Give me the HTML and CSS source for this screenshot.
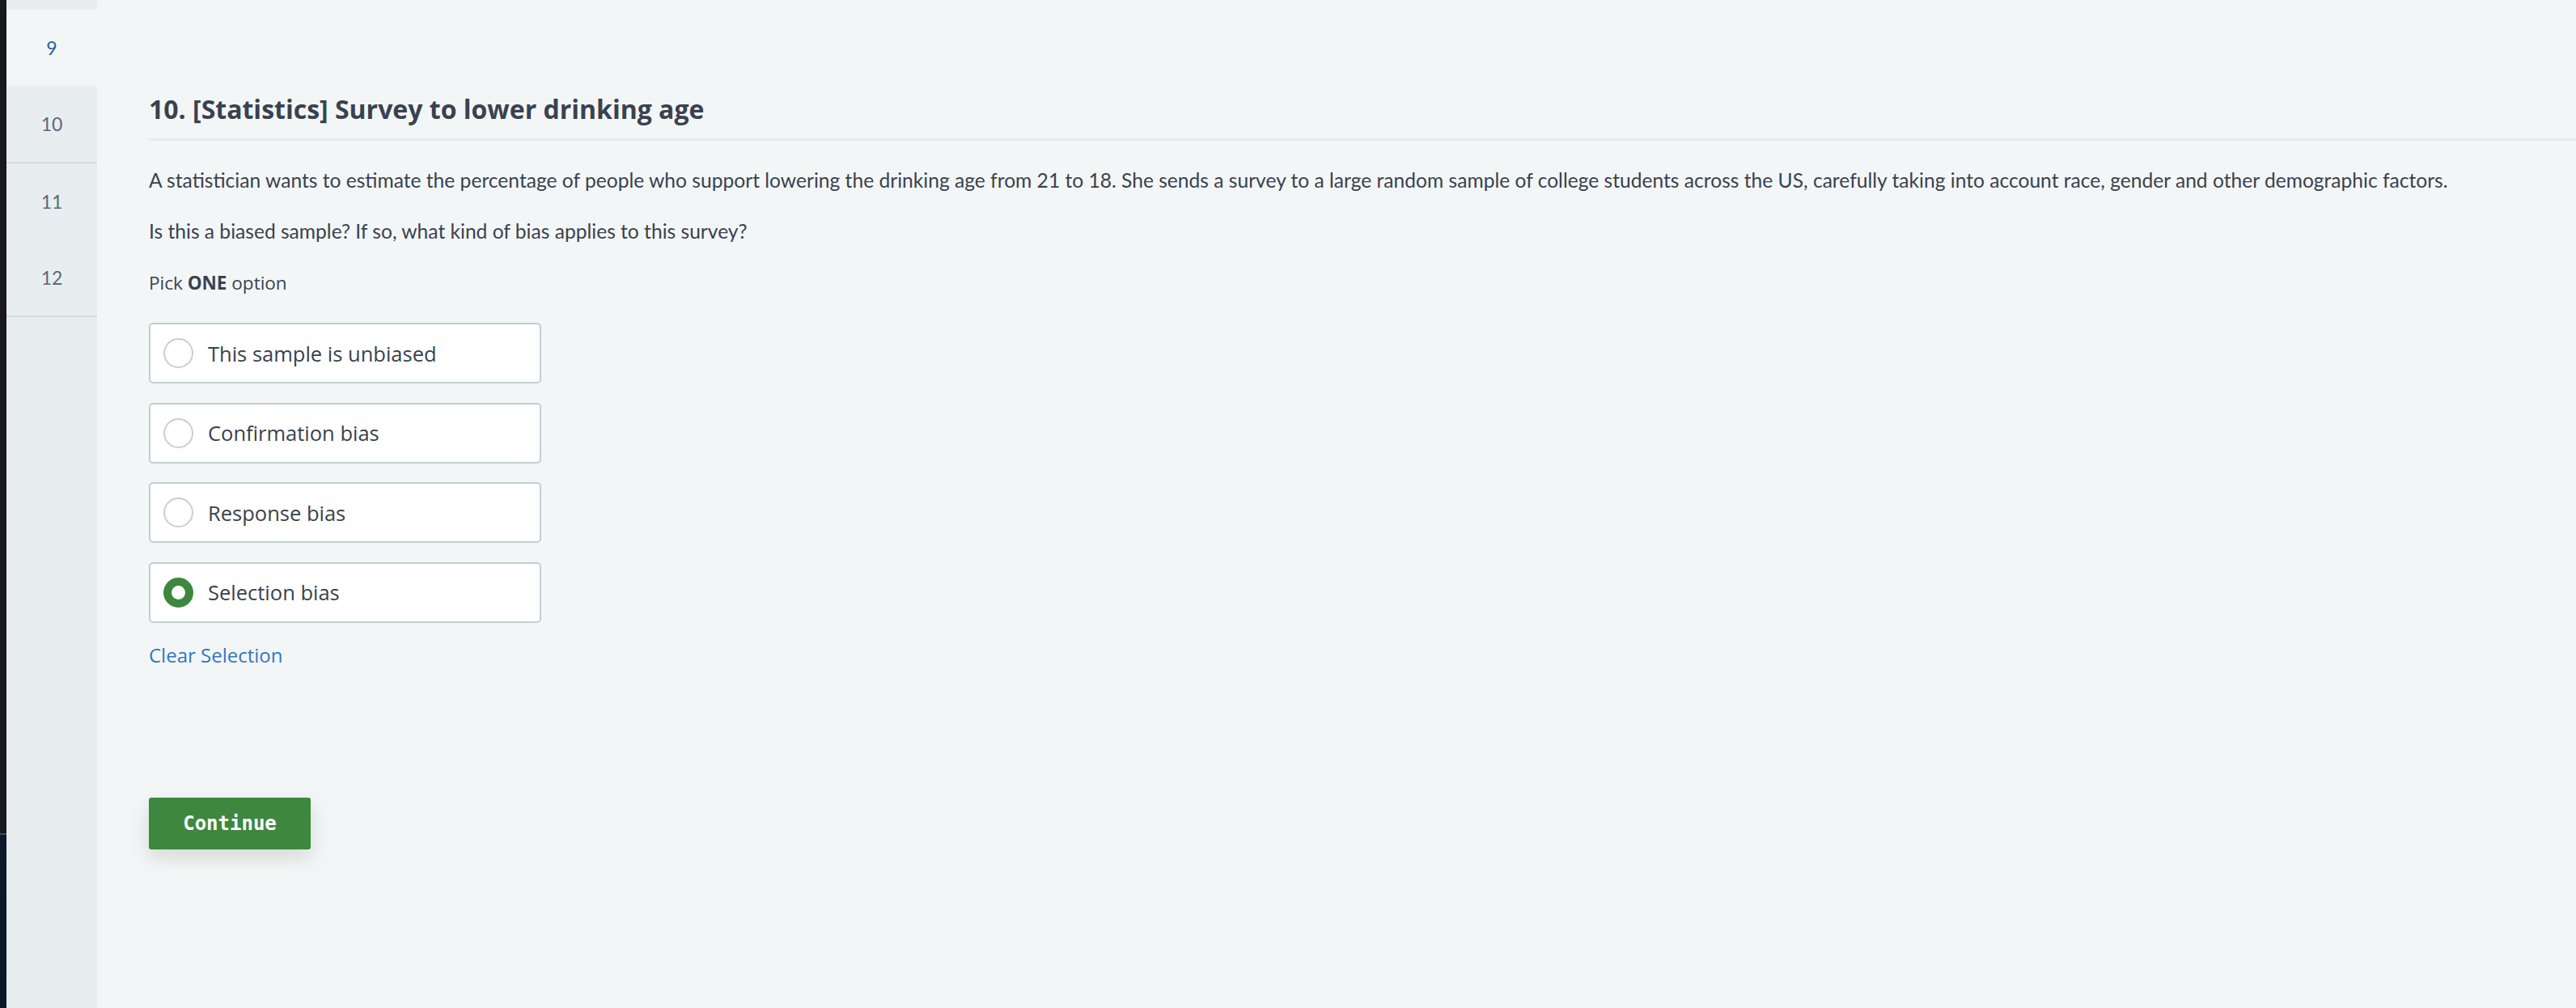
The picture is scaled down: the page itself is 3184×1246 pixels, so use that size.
FILE: index.html
```html
<!DOCTYPE html>
<html lang="en">
<head>
<meta charset="utf-8">
<title>Survey to lower drinking age</title>
<link rel="stylesheet" href="styles.css">
</head>
<body>
<div class="edge"></div>
<nav class="sidebar">
  <div class="nav-item nav-prev"></div>
  <div class="nav-item active">9</div>
  <div class="nav-item sep">10</div>
  <div class="nav-item">11</div>
  <div class="nav-item sep">12</div>
</nav>
<main class="main">
  <h1 class="title">10. [Statistics] Survey to lower drinking age</h1>
  <p class="body-text first">A statistician wants to estimate the percentage of people who support lowering the drinking age from 21 to 18. She sends a survey to a large random sample of college students across the US, carefully taking into account race, gender and other demographic factors.</p>
  <p class="body-text">Is this a biased sample? If so, what kind of bias applies to this survey?</p>
  <p class="pick">Pick <strong>ONE</strong> option</p>
  <div class="options">
    <label class="option"><span class="radio"></span><span class="option-text">This sample is unbiased</span></label>
    <label class="option"><span class="radio"></span><span class="option-text">Confirmation bias</span></label>
    <label class="option"><span class="radio"></span><span class="option-text">Response bias</span></label>
    <label class="option"><span class="radio checked"></span><span class="option-text">Selection bias</span></label>
  </div>
  <a class="clear" href="#">Clear Selection</a>
  <button class="continue" type="button">Continue</button>
</main>
</body>
</html>
```
FILE: styles.css
```css
html, body {
  margin: 0;
  padding: 0;
}
body {
  display: flex;
  width: 3184px;
  height: 1246px;
  overflow: hidden;
  background: #f3f6f7;
  font-family: Lato, "Open Sans", sans-serif;
  color: #39424e;
}
.edge {
  width: 8px;
  flex: none;
  background: linear-gradient(to bottom, #17191d 0, #17191d 1030px, #4a4d52 1030px, #4a4d52 1032px, #0d1a2b 1032px, #0b1828 100%);
}
.sidebar {
  width: 112px;
  flex: none;
  background: #e8edef;
  display: flex;
  flex-direction: column;
}
.nav-item {
  height: 94px;
  display: flex;
  align-items: center;
  justify-content: center;
  font-family: Lato, sans-serif;
  font-size: 23px;
  color: #5d6973;
}
.nav-prev {
  height: 12px;
}
.nav-item.active {
  background: #f3f6f7;
  color: #2c5f96;
}
.nav-item.sep {
  border-bottom: 2px solid #d2dadd;
}
.main {
  flex: 1;
  padding-left: 64px;
  display: flex;
  flex-direction: column;
  align-items: flex-start;
}
.title {
  align-self: stretch;
  margin: 112px 0 0 0;
  padding-bottom: 14px;
  border-bottom: 3px solid #e5e9eb;
  font-family: "Open Sans", sans-serif;
  font-weight: 700;
  font-size: 32px;
  line-height: 45px;
  color: #39424e;
}
.body-text {
  margin: 30px 0 0 0;
  font-family: Lato, sans-serif;
  font-size: 24.6px;
  line-height: 33px;
  color: #39424e;
}
.body-text.first {
  margin-top: 32px;
}
.pick {
  margin: 31px 0 0 0;
  font-family: "Open Sans", sans-serif;
  font-size: 22.5px;
  line-height: 33px;
  color: #39424e;
}
.pick strong {
  font-weight: 700;
}
.options {
  margin-top: 33px;
  display: flex;
  flex-direction: column;
  gap: 23.5px;
}
.option {
  box-sizing: border-box;
  width: 485px;
  height: 75px;
  border: 2px solid #c2ced3;
  border-radius: 5px;
  background: #ffffff;
  display: flex;
  align-items: center;
  padding-left: 16px;
  gap: 18px;
}
.radio {
  box-sizing: border-box;
  width: 37px;
  height: 37px;
  border-radius: 50%;
  border: 2px solid #c4d0d4;
  background: #ffffff;
  flex: none;
}
.radio.checked {
  border: 10px solid #3e873f;
}
.option-text {
  font-family: "Open Sans", sans-serif;
  font-size: 25.5px;
  color: #39424e;
}
.clear {
  margin-top: 24px;
  font-family: "Open Sans", sans-serif;
  font-size: 24px;
  line-height: 32px;
  color: #3178c1;
  text-decoration: none;
}
.continue {
  margin-top: 160px;
  width: 200px;
  height: 64px;
  border: none;
  border-radius: 3px;
  background: #3e873f;
  color: #ffffff;
  font-family: "DejaVu Sans Mono", monospace;
  font-weight: 700;
  font-size: 24px;
  box-shadow: 0 10px 24px rgba(62, 100, 62, 0.18);
  padding: 0;
}
```
